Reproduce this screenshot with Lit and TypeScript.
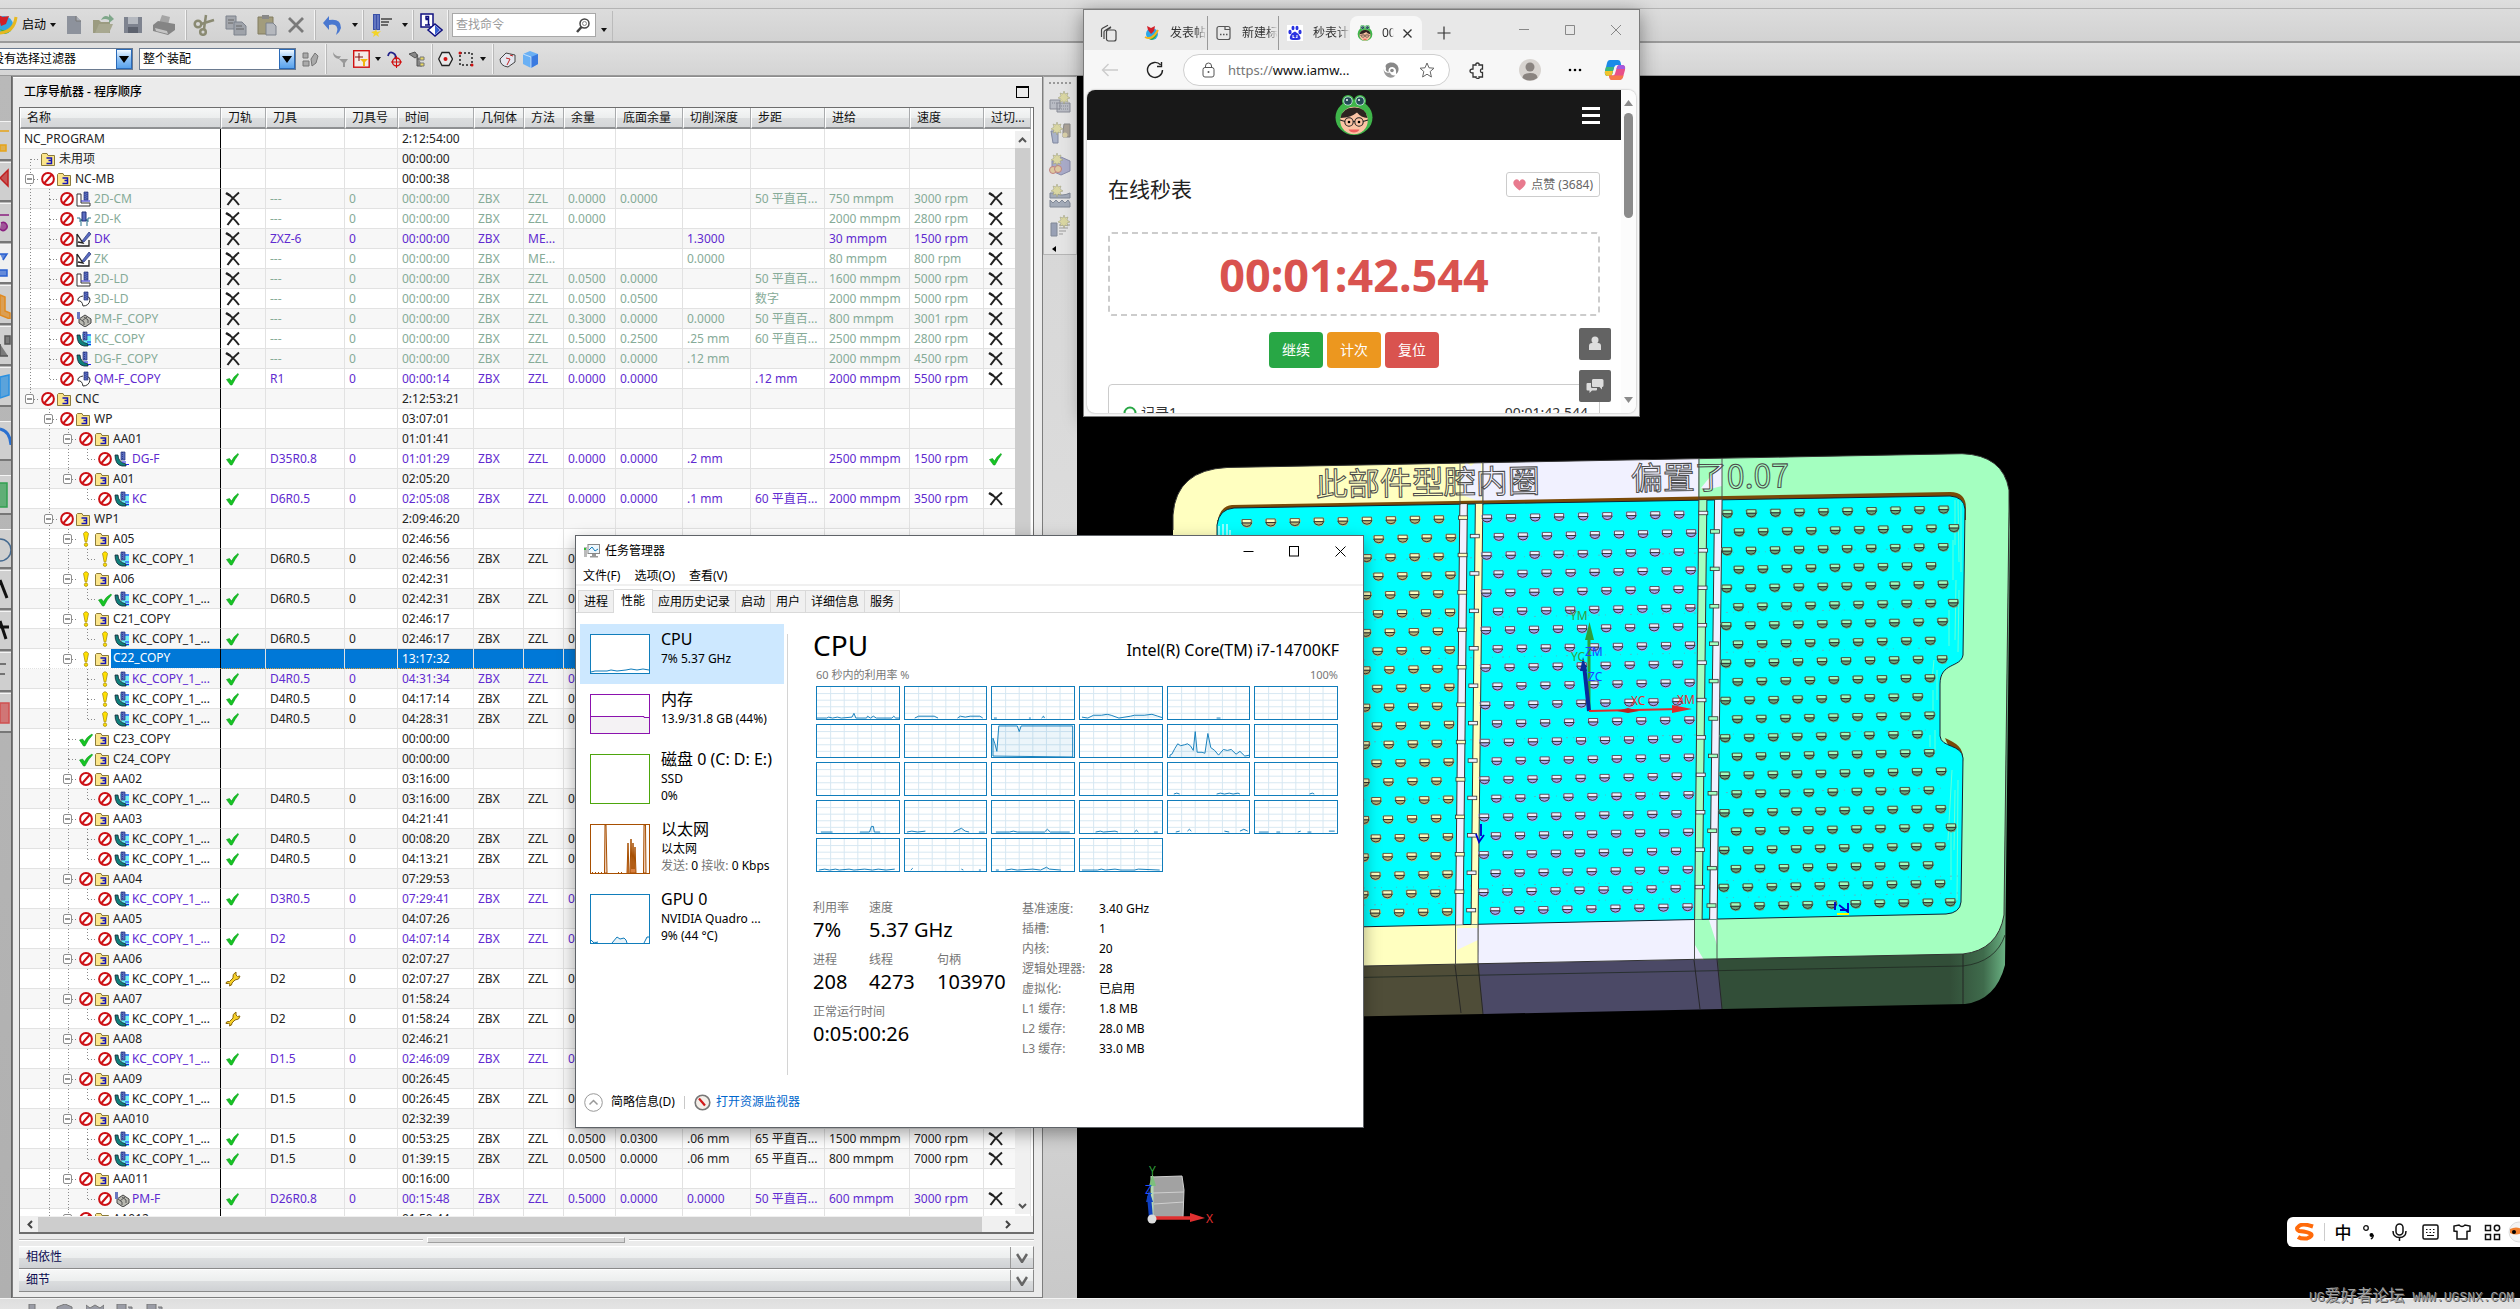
import { LitElement, html, svg, css, nothing } from "lit";
import { customElement } from "lit/decorators.js";
import { classMap } from "lit/directives/class-map.js";

const FONT = css`"Noto Sans", "Noto Sans CJK SC", sans-serif`;

/* ---------- shared icons ---------- */
const ic = (w: number, h: number, body: unknown, label = "") =>
  html`<svg class="ic" width=${w} height=${h} viewBox="0 0 ${w} ${h}" aria-label=${label || nothing} aria-hidden=${label ? nothing : "true"}>${body}</svg>`;

const cross = ic(16, 16, svg`<path d="M2 2.500Q8 6 14 14M14 1.500Q7 7 2.500 14" stroke="#222" stroke-width="2" fill="none"/><path d="M1 2l4 2.500" stroke="#222" stroke-width="2.500"/>`, "无");
const tick = ic(16, 16, svg`<path d="M1.500 8.500L4.500 7.500L6.500 10Q9 5 13 2.500L13.500 3.500Q10 8 7 14H5.500Z" fill="#16c424" stroke="#0c9a1c" stroke-width=".6"/>`, "完成");
const wrench = ic(16, 16, svg`<path d="M1 12.500Q1 10.500 3 10.500L4.500 10.500L8 7Q7 3 11 1L11 4L12.500 5.500L15 5Q14.500 9 10 9L7 12L6.500 14L4.500 15L5 13L3.500 12.500Z" fill="#f6cf28" stroke="#8a6a10"/>`, "修复");
const prohibited = ic(14, 16, svg`<circle cx="7" cy="8" r="5.900" fill="#fff" stroke="#cc0f14" stroke-width="2"/><path d="M3.500 12L10.500 4" stroke="#cc0f14" stroke-width="2"/>`, "禁止");
const bang = ic(14, 16, svg`<path d="M4.500 2.500Q7 -1 9.500 2.500L7.800 11H6.200Z" fill="#ffe100" stroke="#a98f10" stroke-width=".8"/><circle cx="7" cy="13.700" r="1.700" fill="#ffe100" stroke="#a98f10" stroke-width=".8"/>`, "注意");
const folder = ic(16, 16, svg`<path d="M.5 14.500V3.500L1.500 2.500H6L7 4.500H13.500V14.500Z" fill="#fbe58a" stroke="#8b7a3a"/><path d="M5.500 7h5v2.500h-3M10.500 9.500v3h-5" stroke="#1515b8" stroke-width="1.500" fill="none"/>`);
const tool = svg`<path d="M8 1h4v8H8z" fill="#5a6cc0" stroke="#23307a" stroke-width=".7"/><path d="M9 2v6M11 1v7" stroke="#23307a" stroke-width=".8" stroke-dasharray="1 1"/>`;
const holder = svg`<path d="M7 1h4v8H7z" fill="#5a6cc0" stroke="#23307a" stroke-width=".7"/><path d="M8.500 1v8" stroke="#23307a" stroke-width=".8" stroke-dasharray="1 1"/>`;
const ops: Record<string, unknown> = {
  cm: ic(16, 16, svg`<path d="M1 3v12h13v-3H5V3z" fill="#fff" stroke="#333"/>${tool}<path d="M5 10h9" stroke="#22c" />`),
  k: ic(16, 16, svg`<path d="M1 7h3v4M15 7h-3v4M5 15V9h6v6M4 9h8" stroke="#28708a" fill="none"/><path d="M6 1h4v9H6z" fill="#5a6cc0" stroke="#23307a"/>`),
  dk: ic(16, 16, svg`<path d="M1 3v12h12V9M1 3l6 9-5-1" stroke="#222" fill="none" stroke-width="1.300"/><path d="M6 10l7-9 2 2-7 8z" fill="#5a6cc0" stroke="#23307a" stroke-width=".7"/>`),
  ld: ic(16, 16, svg`<path d="M7 5Q1 6 2 10Q6 9 7 15Q13 15 14 9Q14 6 12 6" stroke="#333" fill="#fff"/>${tool}`),
  pm: ic(16, 16, svg`<path d="M3 8l6-4 6 4v4l-6 4-6-4z" fill="#b8b8b0" stroke="#444"/><path d="M4 8l4 3v3M8 6l4 3v3M6 10l5-4" stroke="#555" fill="none"/><path d="M1 1h3v7H1z" fill="#6a78c0"/>`),
  kc: ic(16, 16, svg`<path d="M6 3h9v12H8z" fill="#6ff0f4"/><path d="M1 4h3q0 7 8 9v2H8Q1 14 1 4z" fill="#0f7f7a" stroke="#123" stroke-width=".8"/>${holder}<path d="M11 11h4M12 13.500h3M11 4h4" stroke="#22e"/>`),
  dg: ic(16, 16, svg`<path d="M1 4h3q0 7 8 9v2H8Q1 14 1 4z" fill="#0f7f7a" stroke="#123" stroke-width=".8"/>${holder}<path d="M8 11h4M12 13.500h3" stroke="#22e"/>`),
};

/* ---------- program order data ---------- */
type Row = { l: number; n: string; s?: string; o?: string; c?: string; t?: string; v?: string[]; g?: string };
const G = (l: number, n: string, time: string, s = "no"): Row => ({ l, n, s, v: ["", "", time] });
const K = (n: string, s: string, t: string, c: string, vals: string, g = "x", o = "kc", l = 3): Row =>
  ({ l, n, s, o, c, t, g, v: vals.split("|") });
const LONG = "KC_COPY_1_...";
const D = "|0.0500";

const rows: Row[] = [
  { l: -1, n: "NC_PROGRAM", v: ["", "", "2:12:54:00"] },
  { l: 0, n: "未用项", v: ["", "", "00:00:00"] },
  G(0, "NC-MB", "00:00:38"),
  K("2D-CM", "no", "x", "pale", "---|0|00:00:00|ZBX|ZZL|0.0000|0.0000||50 平直百...|750 mmpm|3000 rpm", "x", "cm", 1),
  K("2D-K", "no", "x", "pale", "---|0|00:00:00|ZBX|ZZL|0.0000||||2000 mmpm|2800 rpm", "x", "k", 1),
  K("DK", "no", "x", "violet", "ZXZ-6|0|00:00:00|ZBX|ME...|||1.3000||30 mmpm|1500 rpm", "x", "dk", 1),
  K("ZK", "no", "x", "pale", "---|0|00:00:00|ZBX|ME...|||0.0000||80 mmpm|800 rpm", "x", "dk", 1),
  K("2D-LD", "no", "x", "pale", "---|0|00:00:00|ZBX|ZZL|0.0500|0.0000||50 平直百...|1600 mmpm|5000 rpm", "x", "cm", 1),
  K("3D-LD", "no", "x", "pale", "---|0|00:00:00|ZBX|ZZL|0.0500|0.0500||数字|2000 mmpm|5000 rpm", "x", "ld", 1),
  K("PM-F_COPY", "no", "x", "pale", "---|0|00:00:00|ZBX|ZZL|0.3000|0.0000|0.0000|50 平直百...|800 mmpm|3001 rpm", "x", "pm", 1),
  K("KC_COPY", "no", "x", "pale", "---|0|00:00:00|ZBX|ZZL|0.5000|0.2500|.25 mm|60 平直百...|2500 mmpm|2800 rpm", "x", "kc", 1),
  K("DG-F_COPY", "no", "x", "pale", "---|0|00:00:00|ZBX|ZZL|0.0000|0.0000|.12 mm||2000 mmpm|4500 rpm", "x", "dg", 1),
  K("QM-F_COPY", "no", "v", "violet", "R1|0|00:00:14|ZBX|ZZL|0.0000|0.0000||.12 mm|2000 mmpm|5500 rpm", "x", "ld", 1),
  G(0, "CNC", "2:12:53:21"),
  G(1, "WP", "03:07:01"),
  G(2, "AA01", "01:01:41"),
  K("DG-F", "no", "v", "violet", "D35R0.8|0|01:01:29|ZBX|ZZL|0.0000|0.0000|.2 mm||2500 mmpm|1500 rpm", "v", "dg"),
  G(2, "A01", "02:05:20"),
  K("KC", "no", "v", "violet", "D6R0.5|0|02:05:08|ZBX|ZZL|0.0000|0.0000|.1 mm|60 平直百...|2000 mmpm|3500 rpm"),
  G(1, "WP1", "2:09:46:20"),
  G(2, "A05", "02:46:56", "bang"),
  K("KC_COPY_1", "bang", "v", "", "D6R0.5|0|02:46:56|ZBX|ZZL" + D, ""),
  G(2, "A06", "02:42:31", "bang"),
  K(LONG, "ok", "v", "", "D6R0.5|0|02:42:31|ZBX|ZZL" + D, ""),
  G(2, "C21_COPY", "02:46:17", "bang"),
  K(LONG, "bang", "v", "", "D6R0.5|0|02:46:17|ZBX|ZZL" + D, ""),
  { ...G(2, "C22_COPY", "13:17:32", "bang"), c: "picked" },
  K(LONG, "bang", "v", "violet", "D4R0.5|0|04:31:34|ZBX|ZZL" + D, ""),
  K(LONG, "bang", "v", "", "D4R0.5|0|04:17:14|ZBX|ZZL" + D, ""),
  K(LONG, "bang", "v", "", "D4R0.5|0|04:28:31|ZBX|ZZL" + D, ""),
  G(2, "C23_COPY", "00:00:00", "ok"),
  G(2, "C24_COPY", "00:00:00", "ok"),
  G(2, "AA02", "03:16:00"),
  K(LONG, "no", "v", "", "D4R0.5|0|03:16:00|ZBX|ZZL" + D, ""),
  G(2, "AA03", "04:21:41"),
  K(LONG, "no", "v", "", "D4R0.5|0|00:08:20|ZBX|ZZL" + D, ""),
  K(LONG, "no", "v", "", "D4R0.5|0|04:13:21|ZBX|ZZL" + D, ""),
  G(2, "AA04", "07:29:53"),
  K(LONG, "no", "v", "violet", "D3R0.5|0|07:29:41|ZBX|ZZL" + D, ""),
  G(2, "AA05", "04:07:26"),
  K(LONG, "no", "v", "violet", "D2|0|04:07:14|ZBX|ZZL" + D, ""),
  G(2, "AA06", "02:07:27"),
  K(LONG, "no", "w", "", "D2|0|02:07:27|ZBX|ZZL" + D, ""),
  G(2, "AA07", "01:58:24"),
  K(LONG, "no", "w", "", "D2|0|01:58:24|ZBX|ZZL" + D, ""),
  G(2, "AA08", "02:46:21"),
  K(LONG, "no", "v", "violet", "D1.5|0|02:46:09|ZBX|ZZL" + D, ""),
  G(2, "AA09", "00:26:45"),
  K(LONG, "no", "v", "", "D1.5|0|00:26:45|ZBX|ZZL" + D, ""),
  G(2, "AA010", "02:32:39"),
  K(LONG, "no", "v", "", "D1.5|0|00:53:25|ZBX|ZZL|0.0500|0.0300|.06 mm|65 平直百...|1500 mmpm|7000 rpm"),
  K(LONG, "no", "v", "", "D1.5|0|01:39:15|ZBX|ZZL|0.0500|0.0000|.06 mm|65 平直百...|800 mmpm|7000 rpm"),
  G(2, "AA011", "00:16:00"),
  K("PM-F", "no", "v", "violet", "D26R0.8|0|00:15:48|ZBX|ZZL|0.5000|0.0000|0.0000|50 平直百...|600 mmpm|3000 rpm", "x", "pm"),
  G(2, "AA012", "01:50:44"),
];

const goesOn = (i: number, k: number) => {
  for (let j = i + 1; j < rows.length; j++) {
    if (rows[j].l < k) return false;
    if (rows[j].l === k) return true;
  }
  return k === 1 || k === 2;
};
const columns: [string, number][] = [
  ["名称", 201], ["刀轨", 45], ["刀具", 79], ["刀具号", 53], ["时间", 76], ["几何体", 50], ["方法", 40],
  ["余量", 52], ["底面余量", 67], ["切削深度", 68], ["步距", 74], ["进给", 85], ["速度", 74], ["过切...", 47],
];
const marks: Record<string, unknown> = { x: cross, v: tick, w: wrench };
const states: Record<string, unknown> = { no: prohibited, bang, ok: ic(14, 16, svg`<path d="M.5 9L3.500 8L5.500 10.500Q8 5.500 13 3L13.500 4Q9 8.500 6 15H4.500Z" fill="#16c424" stroke="#0c9a1c" stroke-width=".6"/>`, "完成") };

@customElement("program-navigator")
class ProgramNavigator extends LitElement {
  static styles = css`
    :host { display: flex; flex-direction: column; min-width: 0; min-height: 0; box-sizing: border-box;
      padding: 0 8px 5px 6px; background: #ebebeb; border: 1px solid #7d7d7d; border-top-color: #8c8c8c; box-shadow: inset 0 1px #fff;
      font: 12px/18px ${FONT}; color: #222; }
    .top { display: flex; align-items: center; justify-content: space-between; height: 30px; padding: 0 5px; }
    h2 { font: 500 12px/20px "Noto Sans", "Noto Sans CJK SC", sans-serif; margin: 0; color: #000; }
    .max { width: 13px; height: 12px; border: 1px solid #000; border-top-width: 2px; background: none; padding: 0; }
    .frame { flex: 1; min-height: 0; display: flex; flex-direction: column; border: 1px solid #6d6d6d; border-bottom-width: 2px; position: relative; background: #fff; }
    .clip { flex: 1; min-height: 0; overflow: hidden; padding-right: 2px; }
    table { width: 100%; table-layout: fixed; border-collapse: separate; border-spacing: 0; }
    th { height: 21px; padding: 1px 0 0 6px; text-align: left; font-weight: 400; color: #111; white-space: nowrap; box-sizing: border-box;
      background: linear-gradient(#f6f7f7, #eceeee 50%, #dcdedf 51%, #d4d6d8); border-left: 1px solid #fff; border-right: 1px solid #a9abad; border-bottom: 2px solid #8e9092; line-height: 18px; }
    td { height: 19px; padding: 0 0 0 4px; line-height: 18px; white-space: nowrap; overflow: hidden; border-bottom: 1px solid #e2e2e2; border-right: 1px solid #e2e2e2; }
    td.mark { padding-left: 4px; }
    td:first-child { padding: 0; border-right: 1px solid #000; }
    tr.odd td { background: #f7f7f7; }
    .pale { color: #86ab98; }
    .violet { color: #5f2bd0; }
    .node { display: flex; align-items: center; height: 19px; }
    .root { padding-left: 4px; }
    .ic { display: block; flex: none; }
    .status { width: 14px; margin-left: 2px; }
    .kind { margin-left: 2px; }
    .label { flex: 1; padding-left: 2px; }
    tr.picked td { background: #0078d7; color: #fff; border-bottom: 1px dotted #e8a33c; box-shadow: inset 0 1px #1c68a8; }
    tr.picked td:first-child { background: none; box-shadow: none; border-bottom-color: #e2e2e2; }
    .picked .label { background: #0078d7; align-self: stretch; }
    .vbar { position: absolute; right: 3px; top: 23px; bottom: 18px; width: 15px; background: #f0f0f0; display: flex; flex-direction: column; align-items: center; justify-content: space-between; }
    .vbar .thumb { flex: 1; width: 15px; background: #cdcdcd; margin-bottom: 150px; }
    .arrow { width: 15px; height: 17px; display: grid; place-items: center; border: 0; background: none; padding: 0; }
    .hbar { display: flex; align-items: center; height: 16px; background: #f0f0f0; padding: 0 17px 0 1px; }
    .hbar .arrow { width: 17px; }
    .hbar .thumb { flex: 1; height: 15px; background: #cdcdcd; margin-right: 17px; }
    .split { display: grid; grid-template-columns: 404px 198px 1fr; gap: 4px; align-items: center; height: 12px; }
    .split i { height: 1px; background: #b5b5b5; border-bottom: 1px solid #fff; }
    .split b { height: 4px; background: #d6d6d6; border: 1px solid #a0a0a0; border-top-color: #fff; border-left-color: #fff; }
    .fold { display: flex; align-items: stretch; justify-content: space-between; width: 100%; height: 23px; padding: 0 0 0 7px; border: 0; border-bottom: 1px solid #8a8a8a; border-top: 1px solid #fff; border-right: 1px solid #8a8a8a;
      background: linear-gradient(#f6f7f7, #eceeee 50%, #dcdedf 51%, #cfd1d4); font: 12px/20px ${FONT}; color: #0b0b50; }
    .fold span { width: 22px; display: grid; place-items: center; border-left: 1px solid #9a9a9a; }
  `;
  name(r: Row, i: number) {
    if (r.l < 0) return html`<div class="node root"><span>${r.n}</span></div>`;
    const kids = (!!rows[i + 1] && rows[i + 1].l > r.l) || i === rows.length - 1;
    const guides = [];
    for (let k = 0; k <= r.l; k++) {
      const on = goesOn(i, k);
      const own = k === r.l;
      guides.push(ic(19, 20, svg`<g stroke="#8a8a8a" stroke-dasharray="1 2">
        ${own && i > 1 ? svg`<path d="M10.500 0v10"/>` : nothing}
        ${on && !own ? svg`<path d="M10.500 0v20"/>` : nothing}
        ${own && on ? svg`<path d="M10.500 10v10"/>` : nothing}
        ${own ? svg`<path d="M11 10.500h8"/>` : nothing}</g>
        ${own && kids && !r.o ? svg`<rect x="5.500" y="5.500" width="8" height="9" rx="1.500" fill="#fff" stroke="#8e8e8e"/><path d="M7 10h5" stroke="#333"/>` : nothing}`));
    }
    return html`<div class="node">${guides}${r.s ? html`<span class="status">${states[r.s]}</span>` : nothing}
      <span class="kind">${r.o ? ops[r.o] : folder}</span><span class="label">${r.n}</span></div>`;
  }
  render() {
    return html`
      <div class="top"><h2>工序导航器 - 程序顺序</h2><button class="max" aria-label="最大化"></button></div>
      <div class="frame">
        <div class="clip"><table>
          <colgroup>${columns.map(([, w]) => html`<col width=${w}>`)}</colgroup>
          <thead><tr>${columns.map(([n]) => html`<th scope="col">${n}</th>`)}</tr></thead>
          <tbody>${rows.map((r, i) => {
            const v = r.v ?? [];
            return html`<tr class=${classMap({ odd: i % 2 === 1, [r.c || "plain"]: true })}>
              <td>${this.name(r, i)}</td><td class="mark">${r.t ? marks[r.t] : nothing}</td>
              ${Array.from({ length: 11 }, (_, k) => html`<td>${v[k] ?? ""}</td>`)}
              <td class="mark">${r.g ? marks[r.g] : nothing}</td></tr>`;
          })}</tbody></table></div>
        <div class="vbar"><button class="arrow" aria-label="向上">${ic(9, 6, svg`<path d="M1 5l3.500-3.500L8 5" stroke="#555" stroke-width="2" fill="none"/>`)}</button><div class="thumb"></div>
          <button class="arrow" aria-label="向下">${ic(9, 6, svg`<path d="M1 1l3.500 3.500L8 1" stroke="#555" stroke-width="2" fill="none"/>`)}</button></div>
        <div class="hbar"><button class="arrow" aria-label="向左">${ic(6, 9, svg`<path d="M5 1L1.500 4.500L5 8" stroke="#444" stroke-width="2" fill="none"/>`)}</button><div class="thumb"></div>
          <button class="arrow" aria-label="向右">${ic(6, 9, svg`<path d="M1 1l3.500 3.500L1 8" stroke="#444" stroke-width="2" fill="none"/>`)}</button></div>
      </div>
      <div class="split"><i></i><b></b><i></i></div>
      ${["相依性", "细节"].map(t => html`<button class="fold">${t}<span>${ic(12, 10, svg`<path d="M1 1l5 8 5-8" stroke="#666" stroke-width="2.500" fill="none"/>`)}</span></button>`)}
    `;
  }
}

/* ---------- part view ---------- */
const CREAM = ["#ffffc0", "#b7b478"], LAV = ["#f1f1ff", "#a5a5ee"], GREEN = ["#a4ffc0", "#66a47a"];
const holes: unknown[] = [];
const bosses: unknown[] = [];
for (let r = 0; r < 22; r++) {
  const odd = r % 2 === 1;
  for (let c = 0; c < 30; c++) {
    let x = 1246.7 + 24.03 * c + (odd ? 12 : 0) - 0.18 * r;
    if (odd && c === 29) { if (![1, 5, 17, 21].includes(r)) continue; x -= 1.5; }
    if ((r === 10 || r === 12) && c === 29) continue;
    const y = 523 + 18.7 * r - 0.0192 * (x - 1246.7);
    if (x < 1350 && r > 0) continue;
    if (c === 9 || c === 19) {
      const fill = c === 19 ? (odd ? GREEN[0] : LAV[0]) : odd ? LAV[0] : CREAM[0];
      bosses.push(svg`<rect x=${x - 4.5} y=${y - 3} width="9" height="3.500" fill=${fill} stroke="#333" stroke-width=".8"/>`);
      continue;
    }
    const [a, b] = c < 9 ? CREAM : c < 19 ? LAV : GREEN;
    holes.push(svg`<g transform="translate(${x.toFixed(1)} ${y.toFixed(1)})"><path d="M-6 -3L-4 -4H5L6 -1L4 4L0 5L-4 3Z" fill=${b}/><path d="M-4.500 -3.500H4.500V0H-4.500Z" fill=${a} stroke="#2b2b2b" stroke-width=".7"/><path d="M-5 0Q-4 3.500 0 3.500T5 0Z" fill=${b} stroke="#2b2b2b" stroke-width=".9"/></g>`);
  }
}
const pocket = "M1217 930V525Q1219 509 1234 508L1950 496Q1964 497 1965 509L1963 630C1963 641 1940 632 1940 650V696C1941 712 1962 700 1963 718L1961 902Q1960 913 1946 914L1217 930Z"
  .replace("630C1963 641 1940 632 1940 650V696C1941 712 1962 700 1963 718", "655C1961 668 1940 662 1940 684V736C1941 748 1962 744 1963 758");

@customElement("part-view")
class PartView extends LitElement {
  static styles = css`
    :host { display: block; min-width: 0; min-height: 0; background: #000; overflow: hidden; }
    svg { display: block; width: 100%; height: 100%; }
    .engraved { font: 32px "Noto Sans CJK SC", sans-serif; fill: none; stroke: #4a4a4a; stroke-width: 1; }
    .axis { font: 12px "Noto Sans", sans-serif; }
  `;
  render() {
    return html`<svg viewBox="1077 76 1443 1222" preserveAspectRatio="xMinYMin slice" role="img" aria-label="零件模型">
      <defs>
        <linearGradient id="edge" x1="1950" x2="2006" gradientUnits="userSpaceOnUse"><stop offset="0" stop-color="#324e38"/><stop offset=".6" stop-color="#3f6b4c"/><stop offset="1" stop-color="#6bb384"/></linearGradient>
        <clipPath id="face"><path d="M1173 970V515Q1176 470 1227 467.500L1962 453.700Q2003 455 2009 490V510L2004 915Q1998 950 1963 954L1173 970Z"/></clipPath>
        <clipPath id="pk"><path d=${pocket}/></clipPath>
      </defs>
      <path d="M1173 960H1483V1014L1173 1020Z" fill="#4f4d38"/>
      <path d="M1478 955H1722V1009L1483 1014Z" fill="#4b4966"/>
      <path d="M1717 950L2004 890L2009 500L2010 530L2005 965Q1996 1000 1965 1004L1722 1009Z" fill="url(#edge)"/>
      <path d="M1173 981L1963 966Q1996 962 2005 935" stroke="#1f2a22" fill="none" stroke-width=".8"/>
      <path d="M1455 965l6 48M1478 964l5 50M1694 960l6 49M1717 959l5 50M1963 954v50" stroke="#222" stroke-width=".9"/>
      <g clip-path="url(#face)">
        <path d="M1173 440H1483L1478 970H1173Z" fill="#ffffc0"/>
        <path d="M1483 440H1699L1694 970H1478Z" fill="#f1f1ff"/>
        <path d="M1699 440H2020V970H1694Z" fill="#a4ffc0"/>
        <path d="M1461 470L1466 462L1471 466L1481 458V502L1462 495Z M1457 928H1478V940L1457 950Z" fill="#f1f1ff"/>
        <path d="M1701 488L1722 462V486L1706 490Z M1709 920H1717V945Z M1695 945L1704 960H1695Z" fill="#f1f1ff"/>
      </g>
      <path d="M1173 530V515Q1176 470 1227 467.500L1962 453.700Q2003 455 2009 490V510L2004 915Q1998 950 1963 954L1363 966" fill="none" stroke="#333"/>
      <path d="M1217 525Q1219 506 1232 505L1950 492Q1966 492 1966 508V520H1217ZM1945 738C1958 744 1964 748 1963 762L1950 750Z" fill="#7a4a08"/>
      <path d=${pocket} fill="#00ffff" stroke="#123" stroke-width="1"/>
      <g stroke="#a4ffc0" stroke-width=".9" opacity=".7" fill="none">
        <path d="M1955 500v45M1958 500l1 62M1961 502v70M1953 540v40M1956 580l-1 60M1959 590l-1 62M1949 610v36M1934 660l-2 20M1937 670v30M1933 690v20M1930 735v12M1935 730v20M1952 770l-4 70M1955 790l-1 60M1958 780l-1 120M1951 830v50"/></g>
      <g stroke="#e8ffff" stroke-width="1.200"><path d="M1219 526v10M1223 524v12M1227 524v12M1230 530v6"/></g>
      <g stroke="#6ab" stroke-width=".8" stroke-dasharray="1 9 2 5 1 14"><path d="M1364 888L1960 876M1364 905L1960 893M1364 560L1950 548M1364 660L1930 648M1364 742L1930 730M1364 800L1950 788M1364 620L1940 608"/></g>
      <g stroke="#333" stroke-width="1" clip-path="url(#pk)">
        <path d="M1460 490h7.500L1463 930h-7.500Z" fill="#f1f1ff"/><path d="M1475.500 490H1483L1478 930h-7Z" fill="#ffffc0"/>
        <path d="M1699 490h8L1702 930h-7.500Z" fill="#a4ffc0"/><path d="M1714.700 490h7.500L1717 930h-7.500Z" fill="#f1f1ff"/>
      </g>
      <g fill="none" stroke="#444" stroke-width=".9"><path d="M1460 463V505M1483 462V505M1699 459V500M1722 458V500M1455.500 925V965M1478 925V964M1694.500 920V960M1717 920V959"/></g>
      ${holes}${bosses}
      <text class="engraved" x="1316" y="496" transform="rotate(-1 1316 496)">此部件型腔内圈</text>
      <text class="engraved" x="1631" y="490" transform="rotate(-1 1631 490)">偏置了0.07</text>
      <g fill="none" stroke-width="2"><path d="M1589 711V640" stroke="#2f9e3a" stroke-width="3"/><path d="M1589 711L1584 665" stroke="#0a2a9a" stroke-width="4"/><path d="M1589 711L1680 709" stroke="#e02b2b"/></g>
      <path d="M1585 640L1589.500 622L1594 640Z" fill="#2f9e3a"/><path d="M1580 671L1583 657L1587 671Z" fill="#0a2a9a"/>
      <path d="M1617 711L1628 708L1639 711L1628 713Z" fill="#c02020"/><path d="M1672 705L1692 709L1672 713Z" fill="#e02b2b"/>
      <g class="axis"><text x="1570" y="620" fill="#3a9a40">YM</text><text x="1571" y="661" fill="#3a9a40">YC</text><text x="1585" y="656" fill="#2040ff">ZM</text><text x="1588" y="681" fill="#2040ff">ZC</text><text x="1631" y="705" fill="#e03030">XC</text><text x="1677" y="704" fill="#e03030">XM</text></g>
      <path d="M1476 834l3 8 5-7M1481 824v12" stroke="#00c" stroke-width="1.800" fill="none"/><path d="M1835 902v8M1839 905l9 7v-9M1840 910h8" stroke="#00c" stroke-width="1.800" fill="none"/><path d="M1837 914h12" stroke="#ff0" stroke-width="2"/>
      <path d="M1151 1177L1182 1176L1184 1190L1183 1217L1153 1218Z" fill="#a2a2a2"/><path d="M1151 1177L1182 1176L1184 1190L1183 1217M1153 1193L1184 1192M1154 1204L1184 1202" stroke="#cfcfcf" fill="none"/>
      <path d="M1152 1218V1176" stroke="#b6d8b6" stroke-width="3"/><path d="M1149 1186L1152.500 1174L1156 1186Z" fill="#7cc07c"/><path d="M1151 1218L1149 1196" stroke="#1040c0" stroke-width="4"/><path d="M1146 1202L1149 1190L1153 1202Z" fill="#1040c0"/>
      <path d="M1153 1218H1195" stroke="#e03030" stroke-width="3.500"/><path d="M1190 1213L1205 1218L1190 1222Z" fill="#e03030"/><circle cx="1152" cy="1219" r="4.500" fill="#ddd"/>
      <g class="axis"><text x="1149" y="1175" fill="#2f9e3a">Y</text><text x="1145" y="1194" fill="#2050ff">Z</text><text x="1206" y="1223" fill="#e03030">X</text></g>
    </svg>`;
  }
}

/* ---------- task manager ---------- */
const cores: (string | null)[] = [
  "M0 33h10l2-1 4 1 5-1 4 1 11-1 2-4 2 5h11l1-2 3 2 3-2 3 2h16l2-2 2 2h5", "M10 33l4-2h16l4 2M54 33l3-2 5 1 5-1 10 0 3 2", "M2 33h3M38 33h2M51 33l2-2 1 2", "M2 32l6 1 6-3h8l6-1 4 1 8 3 12-2 4-1h10l8-1 6 2 6 2", "M50 33h4", null,
  null, null, "M1 33V14l2 6 2 8 2-27h19l2 6 2-6h53v33z", null, "M2 32l2-1 3-6 3-5 3 2 4-1 3-1 3 2 3 5 2-20 2 22 5 0 3 1 3-21 3 15 4 3 4 5 5-6 4 1 4-1 5 5 4-3 5 5 5-1 3-10 3 7 4 4v2H2z", null,
  null, null, null, null, "M6 33l3-1 3 1M50 33l4-1 4 1 5-1 4 1 5-1 2 1", "M56 33l3-1 2 1",
  "M4 33h12M44 33h10l2-6 2 0 1 6h6", "M2 33l5-1 6 1 8-1M50 33l4-2 4-2 4 3 4 1M76 33h6", "M4 33h14l4-1 4 1h28l3-3 3 3h20", "M16 33l5-1 3 1 12-1 3 1M56 33l2-2 2 2M76 33h4", "M8 33l4-1M20 32l2-2 2 2M58 32l5 1M74 32l4-2 4 2", "M4 33h10M22 33h4M44 33l3-1M54 33h4M76 32h6",
  "M2 33l6-1 5 1 6-1 4 1 10-1 5 1 11-1 8 1 6-1 8 1 9-1", "M6 33l2-2M58 32l2 1M76 33h2", "M4 33h3M14 33l6-1 6 1 16-1 8 1 6-3 3 2 12 1", "M2 33h16l4-1 4 1 10-1 6 1h14l4-1 22 1",
];

@customElement("task-manager")
class TaskManager extends LitElement {
  static styles = css`
    :host { display: flex; flex-direction: column; box-sizing: border-box; background: #fff; border: 1px solid #5f6368; box-shadow: 0 6px 16px rgba(0,0,0,.35); font: 12px/16px ${FONT}; color: #000; }
    button { font: inherit; color: inherit; border: 0; background: none; padding: 0; }
    .ic { display: block; flex: none; }
    .bar { display: flex; align-items: center; height: 30px; padding-left: 8px; }
    .bar h1 { flex: 1; font: 12px/16px ${FONT}; margin: 0 0 0 5px; }
    .bar button { width: 46px; height: 30px; display: grid; place-items: center; }
    .menu { display: flex; gap: 14px; height: 20px; padding: 2px 7px 0; border-bottom: 2px solid #f0f0f0; box-sizing: border-box; }
    .tabs { display: flex; align-items: flex-end; height: 26px; padding-left: 2px; border-bottom: 1px solid #d9d9d9; }
    .tab { height: 22px; padding: 0 5px; border: 1px solid #d9d9d9; border-left-width: 0; border-bottom: 0; background: #f0f0f0; white-space: nowrap; }
    .tab:first-child { border-left-width: 1px; }
    .tab.on { background: #fff; height: 24px; margin-bottom: -1px; padding: 0 7px 2px; }
    .body { flex: 1; display: flex; padding: 11px 24px 0 4px; }
    .list { width: 204px; margin: 0; padding: 0; flex: none; }
    .item { display: flex; gap: 11px; width: 204px; height: 60px; padding: 10px 0 0 10px; box-sizing: border-box; text-align: left; align-items: flex-start; }
    .item.tall { height: 70px; }
    .item.on { background: #cde8ff; }
    .item .txt { display: flex; flex-direction: column; margin-top: -5px; white-space: nowrap; }
    .item strong { font: 16px/21px ${FONT}; }
    .item em { color: #777; font-style: normal; }
    .item .txt span { line-height: 17px; }
    .rule { width: 1px; background: #d4d4d4; margin: 10px 25px 2px 3px; }
    .main { flex: 1; min-width: 0; }
    .head { display: flex; justify-content: space-between; align-items: flex-end; height: 43px; }
    .head h2 { font: 28px/43px ${FONT}; margin: 0; }
    .head span { font-size: 16px; line-height: 34px; }
    .cap { display: flex; justify-content: space-between; font-size: 11px; line-height: 16px; color: #777; padding: 0 1px 3px 3px; }
    .grid { display: grid; grid-template-columns: repeat(6, 1fr); gap: 4px; margin: 0 1px 0 3px; }
    .grid svg { width: 100%; height: 34px; display: block; box-sizing: border-box; border: 1px solid #117dbb; }
    .facts { display: flex; margin-top: 27px; gap: 11px; }
    .big { display: grid; grid-template-columns: 56px 68px 74px; grid-auto-rows: 52px; margin: 0; align-content: start; }
    dt { color: #777; line-height: 18px; }
    dd { margin: 0; }
    .big dd { font-size: 20px; line-height: 26px; white-space: nowrap; }
    .big .wide { grid-column: 1 / -1; }
    .small { margin: 0; }
    .small div { display: grid; grid-template-columns: 77px auto; height: 20px; }
    .small dt, .small dd { line-height: 20px; }
    .foot { display: flex; align-items: center; gap: 9px; height: 50px; padding-left: 8px; }
    .foot a { color: #0066cc; text-decoration: none; margin-left: -4px; }
    .foot button { margin-left: -1px; }
    .foot i { width: 1px; height: 13px; background: #c8c8c8; }
  `;
  render() {
    const it = (on: boolean, tall: boolean, col: string, g: unknown, title: string, ...sub: unknown[]) => html`
      <button class=${classMap({ item: true, on, tall })}>
        ${ic(60, tall ? 50 : 40, svg`<rect x=".5" y=".5" width="59" height=${tall ? 49 : 39} fill="#fff" stroke=${col}/>${g}`)}
        <span class="txt"><strong>${title}</strong>${sub.map(s => html`<span>${s}</span>`)}</span></button>`;
    const spikes = svg`<path d="M14.500 49L15 1h1l1 48zM53.500 49L54 1h1.500l.5 48z" fill="#f5d9c8" stroke="#a74f01"/><path d="M37 49l1-30 1 30M40 49l1-34 1 30 1-26 1 26 1-22 1 26z" fill="#d98040" stroke="#a74f01"/><path d="M2 48.500h10M28 48.500h6" stroke="#a74f01" stroke-dasharray="1 2"/>`;
    const big = [["利用率", "7%"], ["速度", "5.37 GHz"], null, ["进程", "208"], ["线程", "4273"], ["句柄", "103970"]];
    const small = [["基准速度:", "3.40 GHz"], ["插槽:", "1"], ["内核:", "20"], ["逻辑处理器:", "28"], ["虚拟化:", "已启用"], ["L1 缓存:", "1.8 MB"], ["L2 缓存:", "28.0 MB"], ["L3 缓存:", "33.0 MB"]];
    return html`
      <header class="bar">${ic(16, 14, svg`<path d="M0 3h3v10H0z" fill="#bbb"/><rect x="4" y=".5" width="11.500" height="9" fill="#eef7fd" stroke="#888"/><path d="M5 6l3-3 3 4 3-2" stroke="#117dbb" fill="none"/><path d="M8 10h4v2h2v1.500H6V12h2z" fill="#999"/><path d="M0 4h2v2H0z" fill="#3b3"/>`)}
        <h1>任务管理器</h1>
        <button aria-label="最小化">${ic(11, 11, svg`<path d="M.5 5.500h10" stroke="#000"/>`)}</button><button aria-label="最大化">${ic(11, 11, svg`<rect x=".5" y=".5" width="9" height="9.500" fill="none" stroke="#000"/>`)}</button><button aria-label="关闭">${ic(11, 11, svg`<path d="M.5.5l10 10M10.500.5l-10 10" stroke="#000"/>`)}</button></header>
      <nav class="menu">${["文件(F)", "选项(O)", "查看(V)"].map(t => html`<button>${t}</button>`)}</nav>
      <div class="tabs" role="tablist">${["进程", "性能", "应用历史记录", "启动", "用户", "详细信息", "服务"].map((t, i) => html`<button role="tab" class=${classMap({ tab: true, on: i === 1 })}>${t}</button>`)}</div>
      <div class="body">
        <div class="list">
          ${it(true, false, "#117dbb", svg`<path d="M1 38l4-1h12l4-1 6 1 9-1 5-1 6 1 6-1 6 1" stroke="#117dbb" fill="none"/>`, "CPU", "7%  5.37 GHz")}
          ${it(false, false, "#8b12ae", svg`<path d="M1 22.500h53v1h5V39H1z" fill="#f4f2f4"/><path d="M1 22.500h53v1h5" stroke="#8b12ae" fill="none"/>`, "内存", "13.9/31.8 GB (44%)")}
          ${it(false, true, "#4da60c", nothing, "磁盘 0 (C: D: E:)", "SSD", "0%")}
          ${it(false, true, "#a74f01", spikes, "以太网", "以太网", html`<em>发送:</em> 0 <em>接收:</em> 0 Kbps`)}
          ${it(false, true, "#117dbb", svg`<path d="M1 46l3 3 4-1M22 49l5-6 3 2 4-1 2 2 1 3M54 49l3-6h2" stroke="#117dbb" fill="#e8f2f8"/>`, "GPU 0", "NVIDIA Quadro ...", "9%  (44 °C)")}
        </div>
        <div class="rule"></div>
        <section class="main">
          <div class="head"><h2>CPU</h2><span>Intel(R) Core(TM) i7-14700KF</span></div>
          <div class="cap"><span>60 秒内的利用率 %</span><span>100%</span></div>
          <div class="grid">${cores.map(p => html`<svg viewBox="0 0 84 34" preserveAspectRatio="none" aria-hidden="true"><path d="M14 0v34M28 0v34M42 0v34M56 0v34M70 0v34M0 7h84M0 14h84M0 21h84M0 28h84" stroke="#d5e7f1" fill="none"/>${p ? svg`<path d=${p} fill="#117dbb" fill-opacity=".08" stroke="#117dbb"/>` : nothing}</svg>`)}</div>
          <div class="facts">
            <dl class="big">${big.map(f => html`<div>${f ? html`<dt>${f[0]}</dt><dd>${f[1]}</dd>` : nothing}</div>`)}
              <div class="wide"><dt>正常运行时间</dt><dd>0:05:00:26</dd></div></dl>
            <dl class="small">${small.map(([a, b]) => html`<div><dt>${a}</dt><dd>${b}</dd></div>`)}</dl>
          </div>
        </section>
      </div>
      <footer class="foot">${ic(19, 19, svg`<circle cx="9.500" cy="9.500" r="8.800" fill="#fff" stroke="#999"/><path d="M5.500 11.500l4-4 4 4" stroke="#999" stroke-width="1.500" fill="none"/>`)}<button>简略信息(D)</button><i></i>
        ${ic(17, 17, svg`<circle cx="8.500" cy="8.500" r="7.300" fill="#f3eee8" stroke="#777" stroke-width="1.600"/><path d="M5 4.500l6 7" stroke="#d01818" stroke-width="2.200"/>`)}<a href="#monitor">打开资源监视器</a></footer>`;
  }
}

/* ---------- browser window ---------- */
const frog = (s: number) => html`<svg class="ic" width=${s} height=${s} viewBox="0 0 40 40" aria-hidden="true"><ellipse cx="20" cy="22.500" rx="18.500" ry="17.500" fill="#3fb54a"/><circle cx="14" cy="6" r="6" fill="#3fb54a"/><circle cx="26" cy="6" r="6" fill="#3fb54a"/><circle cx="14" cy="6" r="4.600" fill="#cfeaea"/><circle cx="26" cy="6" r="4.600" fill="#cfeaea"/><circle cx="14" cy="6" r="3.800" fill="#234a55"/><circle cx="26" cy="6" r="3.800" fill="#234a55"/><circle cx="13" cy="5" r="1" fill="#fff"/><circle cx="25" cy="5" r="1" fill="#fff"/><circle cx="20" cy="25.500" r="13.800" fill="#fbc3a4"/><path d="M6.500 23Q8 13 20 12.500T33.500 23Q27 22.500 23 17.500Q17 22.500 6.500 23Z" fill="#2c2420"/><g fill="none" stroke="#222" stroke-width="1.100"><circle cx="15" cy="27" r="4.200"/><circle cx="25" cy="27" r="4.200"/><path d="M6 25l5 1.500M34 25l-5 1.500M19 26.500h2"/></g><circle cx="15" cy="27" r="1.300"/><circle cx="25" cy="27" r="1.300"/><path d="M14.500 34.500h11Q24 37.500 20 37.500T14.500 34.500Z" fill="#f0605f"/></svg>`;
const planet = html`<svg class="ic" width="16" height="16" viewBox="0 0 16 16" aria-hidden="true"><circle cx="8" cy="9" r="6" fill="#2aa7e8"/><path d="M4 12q5 2 9-4-1 6-6 7z" fill="#35b03c"/><path d="M1 12Q8 16 14 5" stroke="#f2b51e" stroke-width="2" fill="none"/><path d="M3 1l4 2 4-2-1 5-3 3-3-4z" fill="#d3202a"/></svg>`;

@customElement("web-browser")
class WebBrowser extends LitElement {
  static styles = css`
    :host { display: flex; flex-direction: column; box-sizing: border-box; background: #f7f7f7; border: 1px solid #7c7c7c; box-shadow: 0 4px 18px rgba(0,0,0,.4); font: 12px/16px ${FONT}; color: #333; padding: 0 3px 3px; }
    button { font: inherit; color: inherit; border: 0; background: none; padding: 0; display: grid; place-items: center; }
    .ic { display: block; flex: none; }
    .strip { display: flex; align-items: flex-end; height: 40px; background: #e8e8e8; margin: 0 -3px; }
    .strip .all { width: 49px; height: 34px; }
    .tab { display: flex; align-items: center; gap: 10px; width: 71px; height: 34px; padding-left: 8px; box-sizing: border-box; overflow: hidden; }
    .tab span { overflow: hidden; white-space: nowrap; font-size: 12px; flex: 1; mask-image: linear-gradient(90deg, #000 70%, transparent); }
    .tab:nth-child(2) { padding-left: 11px; width: 75px; border-right: 1px solid #999; }
    .tab:nth-child(3) { border-right: 1px solid #999; }
    .tab.on { background: #f7f7f7; border-radius: 8px 8px 0 0; width: 72px; gap: 9px; padding: 0 10px 0 7px; }
    .new { width: 43px; height: 34px; }
    .wins { display: flex; margin-left: auto; align-self: flex-start; color: #777; }
    .wins button { width: 46px; height: 40px; }
    .tools { display: flex; align-items: center; height: 40px; }
    .tools > button { height: 32px; flex: none; }
    .back { width: 46px; } .again { width: 44px; }
    .url { display: flex; flex: none; align-items: center; width: 267px; height: 32px; box-sizing: border-box; margin-left: 6px; padding: 0 14px 0 18px; border: 1px solid #cfcfcf; border-radius: 16px; background: #fff; }
    .addr { flex: 1; margin-left: 13px; font: 13px/18px ${FONT}; color: #767676; white-space: nowrap; }
    .addr b { font-weight: 400; color: #111; }
    .url .gap { margin-left: 20px; }
    .ext { width: 54px; } .bar { width: 1px; height: 16px; background: #ccc; } .me { width: 52px; } .more { width: 38px; } .pilot { width: 42px; }
    .page { flex: 1; min-height: 0; display: flex; background: #fff; border-radius: 8px; overflow: hidden; box-shadow: 0 0 2px #999; }
    .site { flex: 1; min-width: 0; display: flex; flex-direction: column; position: relative; }
    .nav { flex: none; display: grid; grid-template-columns: 1fr auto 1fr; align-items: center; height: 50px; background: #181818; }
    .nav .ham { justify-self: end; margin-right: 20px; grid-column: 3; }
    .nav .logo { grid-column: 2; }
    .title { display: flex; justify-content: space-between; align-items: flex-start; padding: 32px 21px 0; height: 60px; flex: none; }
    h1 { font: 21px/34px ${FONT}; margin: 0; color: #222; }
    .like { display: flex; align-items: center; gap: 5px; height: 25px; padding: 0 6px; border: 1px solid #ccc; border-radius: 3px; color: #666; background: #fff; white-space: nowrap; }
    .clock { flex: none; box-sizing: border-box; margin: 0 21px; height: 84px; border: 2px dashed #ccc; border-radius: 4px; color: #d9534f; font: 700 45px/82px ${FONT}; text-align: center; }
    .acts { display: flex; justify-content: center; gap: 4px; margin: 16px 0; flex: none; }
    .acts button { width: 54px; height: 36px; border-radius: 4px; color: #fff; font-size: 14px; }
    .go { background: #28a745; } .lap { background: #ec971f; } .reset { background: #d9534f; }
    .log { margin: 0 21px; padding: 16px 11px 0 14px; flex: none; border: 1px solid #ccc; border-radius: 4px; height: 60px; display: flex; justify-content: space-between; font-size: 14px; line-height: 20px; color: #333; }
    .log span { display: flex; align-items: center; gap: 4px; height: 24px; }
    .float { position: absolute; right: 10px; top: 238px; display: grid; gap: 10px; }
    .float button { width: 32px; height: 32px; background: #636363; border-radius: 2px; }
    .scroll { width: 15px; display: flex; flex-direction: column; align-items: center; background: #fcfcfc; padding: 10px 0; justify-content: space-between; }
    .scroll .thumb { width: 9px; height: 105px; border-radius: 5px; background: #8b8b8b; margin: 7px 0 auto; }
  `;
  render() {
    const w = (d: string, l: string) => html`<button aria-label=${l}>${ic(12, 12, svg`<path d=${d} stroke="#888" fill="none"/>`)}</button>`;
    return html`
      <div class="strip">
        <button class="all" aria-label="标签页操作">${ic(18, 18, svg`<path d="M6 6.500l5-3M1.500 13V6Q1.500 5 2.500 4.300L8 1.200M4 15V8q0-1 1-1.600l6-3.700" stroke="#444" fill="none" stroke-width="1.200"/><rect x="6.500" y="6" width="9.500" height="11" rx="2" fill="none" stroke="#444" stroke-width="1.200"/>`)}</button>
        <div class="tab">${planet}<span>发表帖子</span></div>
        <div class="tab">${ic(16, 16, svg`<rect x="1" y="1.500" width="13" height="13" rx="2" fill="none" stroke="#555" stroke-width="1.200"/><path d="M9 1.500v3h5" fill="none" stroke="#555" stroke-width="1.200"/><path d="M4 9.500h1.500M7 9.500h1.500M10 9.500h1.500" stroke="#555" stroke-width="1.500"/>`)}<span>新建标签</span></div>
        <div class="tab">${ic(16, 16, svg`<rect width="16" height="16" fill="#fff"/><g fill="#2932e1"><ellipse cx="3" cy="7" rx="1.600" ry="2.200"/><ellipse cx="6" cy="3" rx="1.500" ry="2.200"/><ellipse cx="10" cy="3" rx="1.500" ry="2.200"/><ellipse cx="13" cy="7" rx="1.600" ry="2.200"/><path d="M8 6.500Q11 8 13 11.500T10 15H6Q2 15 3 11.500T8 6.500Z"/></g><path d="M6 10v3M10 10v3M6 12.500h1.500M8.800 12.500h1" stroke="#fff" fill="none"/>`)}<span>秒表计时</span></div>
        <div class="tab on">${frog(16)}<span>00:01</span><button aria-label="关闭标签">${ic(9, 9, svg`<path d="M.5.5l8 8M8.500.5l-8 8" stroke="#333" stroke-width="1.300"/>`)}</button></div>
        <button class="new" aria-label="新标签">${ic(14, 14, svg`<path d="M7 .5v13M.5 7h13" stroke="#333" stroke-width="1.200"/>`)}</button>
        <div class="wins">${w("M1 5.500h10", "最小化")}${w("M1.500 1.500h9v9h-9z", "最大化")}${w("M1 1l10 10M11 1L1 11", "关闭")}</div>
      </div>
      <div class="tools">
        <button class="back" aria-label="后退">${ic(18, 14, svg`<path d="M1.500 7H17M7.500 1L1.500 7l6 6" stroke="#ccc" fill="none" stroke-width="1.400"/>`)}</button>
        <button class="again" aria-label="刷新">${ic(18, 18, svg`<path d="M16.500 9a7.500 7.500 0 1 1-2-5.200M15.500 1v4.500H11" stroke="#222" fill="none" stroke-width="1.400"/>`)}</button>
        <div class="url">${ic(13, 16, svg`<rect x="1" y="5.500" width="11" height="9.500" rx="2" fill="none" stroke="#555"/><path d="M3.500 5.500V4q0-3 3-3t3 3v1.500" fill="none" stroke="#555"/><circle cx="6.500" cy="10" r="1" fill="#555"/>`)}
          <div class="addr" role="textbox" aria-label="地址栏">https://<b>www.iamw...</b></div>
          ${ic(16, 16, svg`<path d="M3 6Q1 2 7 .5Q14 0 15.500 6Q16 10 13 12Q14 6 9.500 5Q5 5 5.500 10Q2 9 3 6Z" fill="#888"/><path d="M.5 7Q2 12 7 10.500Q8 14 12.500 13.500Q9 17 5 15Q1 13 .5 7Z" fill="#999"/><circle cx="9" cy="8.500" r="1.800" fill="#888"/>`)}
          <span class="gap">${ic(16, 16, svg`<path d="M8 1l2 4.800 5 .4-3.800 3.300L12.400 15 8 12.200 3.600 15l1.200-5.500L1 6.200l5-.4z" stroke="#666" fill="none"/>`)}</span></div>
        <button class="ext" aria-label="扩展">${ic(16, 17, svg`<path d="M4 3h3q-.5-2 1.500-2T10 3h3.500v4q-2-.5-2 1.700t2 1.800V15H10q.5 2-1.500 1.500T7 15H4v-4Q1 11 1 9t3-2z" stroke="#333" fill="none" stroke-width="1.300"/>`)}</button><i class="bar"></i>
        <button class="me" aria-label="个人资料">${ic(22, 22, svg`<circle cx="11" cy="11" r="11" fill="#d8d4d0"/><circle cx="11" cy="8" r="4.500" fill="#8a8480"/><path d="M3.500 19q0-5 7.500-5t7.500 5Q11 24 3.500 19z" fill="#8a8480"/>`)}</button>
        <button class="more" aria-label="更多">${ic(14, 4, svg`<circle cx="2" cy="2" r="1.300"/><circle cx="7" cy="2" r="1.300"/><circle cx="12" cy="2" r="1.300"/>`)}</button>
        <button class="pilot" aria-label="Copilot">${ic(22, 22, svg`<path d="M6 1h8q2 0 2.500 2l.7 3H13q-2 0-2.700 2L8 15.500Q7.500 17 6 17H4Q0 17 1 12L3 4Q3.700 1 6 1Z" fill="#1a8be8"/><path d="M2 8h8l-2 7.500Q7.500 17 6 17H4Q0 17 1 12Z" fill="#3cb878"/><path d="M1 12h8l-1 3.500Q7.500 17 6 17H4Q.2 17 1 12Z" fill="#f2c32c"/><path d="M16 21H8q-2 0-2.500-2L5 16.500h4q1.500 0 2-2L13 8q.6-2 2.500-2H18q4 0 3 5l-2 7q-.8 3-3 3Z" fill="#e8508a"/><path d="M13 8q.6-2 2.500-2H18q3.500 0 3 4h-8.500z" fill="#a35be0"/><path d="M5 16.500h14.500L19 18q-.8 3-3 3H8q-2 0-2.500-2z" fill="#f5784a"/>`)}</button>
      </div>
      <div class="page">
        <div class="site">
          <div class="nav"><a class="logo" href="#home" aria-label="首页">${frog(40)}</a><button class="ham" aria-label="菜单">${ic(20, 17, svg`<path d="M1 1.500h18M1 8.500h18M1 15.500h18" stroke="#fff" stroke-width="3"/>`)}</button></div>
          <div class="title"><h1>在线秒表</h1><button class="like">${ic(13, 12, svg`<path d="M6.500 11.500Q-3 4.500 2 .8 5-.6 6.500 2.500 8-.6 11 .8 16 4.500 6.500 11.500z" fill="#e87a8e"/>`)}点赞 (3684)</button></div>
          <div class="clock">00:01:42.544</div>
          <div class="acts"><button class="go">继续</button><button class="lap">计次</button><button class="reset">复位</button></div>
          <div class="log"><span>${ic(14, 14, svg`<circle cx="7" cy="7" r="5.500" fill="none" stroke="#28a745" stroke-width="2"/>`)}记录1</span><span>00:01:42.544</span></div>
          <div class="float"><button aria-label="账户">${ic(14, 16, svg`<circle cx="7" cy="4" r="3.500" fill="#ddd"/><path d="M1 14V10q0-3 3-3h6q3 0 3 3v4z" fill="#ddd"/>`)}</button><button aria-label="留言">${ic(18, 16, svg`<path d="M7 1h9q1.500 0 1.500 1.500v5Q17.500 9 16 9v2.500L13.500 9H7Q6 9 6 7.500v-5Q6 1 7 1Z" fill="#ddd"/><path d="M1.500 5H5v4q0 1 1 1h5v1.500q0 1-1 1H6L3.500 15v-2.500h-2q-1 0-1-1V6q0-1 1-1z" fill="#ddd"/>`)}</button></div>
        </div>
        <div class="scroll">${ic(9, 6, svg`<path d="M4.500 0L9 6H0z" fill="#8b8b8b"/>`)}<div class="thumb"></div>${ic(9, 6, svg`<path d="M4.500 6L9 0H0z" fill="#8b8b8b"/>`)}</div>
      </div>`;
  }
}

/* ---------- desktop ---------- */
const star = svg`<path d="M7 0l1 3 3-1-1 3 3 2-3 1 1 3-3-1-1 3-1-3-3 1 1-3-3-1 3-2-1-3 3 1z" fill="#d9d6a2" stroke="#9a9a7a" stroke-width=".5"/>`;
const caret = ic(6, 4, svg`<path d="M0 0h6L3 4z" fill="#111"/>`);
const fileTools = [
  ic(16, 20, svg`<path d="M1 1h9l5 5v13H1z" fill="#8d929c"/><path d="M10 1v5h5" fill="#a9adb5" stroke="#777"/>`, "新建"),
  ic(22, 22, svg`<path d="M1 19V6h6l2 2h9v11z" fill="#9b9b80"/><path d="M3 19l4-9h14l-4 9z" fill="#a8a890"/><path d="M9 6Q12 0 17 3V0l5 5-5 4V6q-4-2-8 0z" fill="#7fa78a"/>`, "打开"),
  ic(18, 20, svg`<path d="M0 2h18v16H0z" fill="#7e838f"/><path d="M4 2h10v7H4z" fill="#b5b9c0"/><path d="M4 12h10v6H4z" fill="#5d626e"/>`, "保存"),
  ic(24, 22, svg`<path d="M7 9l3-8 8 2-2 8z" fill="#a5a5a5"/><path d="M1 11l5-4 17 3v6l-7 5-15-4z" fill="#858585"/><path d="M3 14l12 3 1 3-12-3z" fill="#c5c5c5"/>`, "打印"),
];
const editTools = [
  ic(22, 22, svg`<g fill="none" stroke="#8a8a72" stroke-width="2.500"><circle cx="5" cy="10" r="3.300"/><circle cx="10" cy="18" r="2.800"/><path d="M8 10l13-4M11 15L13 1"/></g>`, "剪切"),
  ic(22, 22, svg`<path d="M1 2h10v13H1z" fill="#a4a7ad" stroke="#7d828c"/><path d="M9 8h8l4 4v9H9z" fill="#9fa3aa" stroke="#7d828c"/><path d="M11 12h6M11 15h8M3 6h6M3 9h5" stroke="#666"/>`, "复制"),
  ic(20, 22, svg`<path d="M1 3h15v17H1z" fill="#a29c7c" stroke="#827d60"/><path d="M5 1h7v4H5z" fill="#888"/><path d="M9 9h7l3 3v9H9z" fill="#b5b8be" stroke="#7d828c"/>`, "粘贴"),
  ic(18, 18, svg`<path d="M2 2l14 14M16 2L2 16" stroke="#7a7a7a" stroke-width="2.800"/>`, "删除"),
];
const sideIcons = [
  "M0 4h9M0 18h6v6H0z", "M8 2L0 10l8 8z", "M0 6h9M0 20a4 4 0 1 0 1-6", "M0 4h7L3 10M0 20h7v6H0", "M0 4l5 2v14l5 2v6l-10-4z", "M5 4h5v8H5zM0 12v12h8", "M0 4l9-2v20l-9 3z", "M0 2q10 2 11 16", "M0 2h7v24H0", "M0 4a11 11 0 0 1 0 22", "M0 4l7 18", "M0 4l6 18M0 10h9", "M0 6h6M0 16h5", "M0 4h9v20H0z",
];
const sideColors = ["#e6a41a", "#c02020", "#8a2080", "#2a60d0", "#e08a20", "#555", "#2a90e0", "#2a70d0", "#30a050", "#456a90", "#111", "#111", "#555", "#d05050"];

@customElement("app-root")
class AppRoot extends LitElement {
  static styles = css`
    :host { display: grid; grid-template-rows: 9px 34px 33px minmax(0, 1fr) 11px; height: 100vh; overflow: hidden; position: relative; background: #dcdcdc; font: 12px/16px ${FONT}; color: #111; }
    .ic { display: block; flex: none; }
    button { border: 0; background: none; padding: 0; font: inherit; }
    .cap { background: linear-gradient(#dedede, #dadada); border-bottom: 1px solid #b4b4b4; }
    .bar { display: flex; align-items: center; background: linear-gradient(#dcdcdc, #d2d2d2); border-bottom: 2px solid #9a9a9a; box-sizing: border-box; min-width: 0; }
    .bar.sel { background: linear-gradient(#e0e0e0, #d4d4d4); border-bottom: 1px solid #999; gap: 6px; }
    .group { display: flex; align-items: center; height: 30px; border-right: 1px solid #f4f4f4; box-shadow: 1px 0 #b9b9b9; gap: 10px; padding: 0 9px 0 7px; }
    .group.first { padding-left: 0; }
    .group.tight { padding-right: 4px; }
    .start { display: flex; align-items: center; gap: 4px; }
    .find { display: flex; align-items: center; width: 144px; height: 24px; margin: 0 5px 0 4px; box-sizing: border-box; background: #fff; border: 1px solid #a8a8a8; padding: 0 5px 0 3px; }
    .find input { flex: 1; min-width: 0; border: 0; outline: 0; font: 12px/16px ${FONT}; padding: 0; background: none; }
    .find input::placeholder { color: #9a9a9a; }
    .opts { align-self: flex-end; height: 30px; display: grid; place-items: end center; padding: 0 5px 9px 0; box-sizing: border-box; border-right: 1px solid #bbb; }
    .pick { display: flex; flex: none; width: 157px; height: 22px; box-sizing: border-box; border: 1px solid #6a7a90; background: #fff; align-items: center; position: relative; }
    .pick.shift { width: 145px; margin-left: -12px; }
    .pick select { appearance: none; border: 0; outline: 0; background: none; width: 100%; padding: 0 20px 0 3px; font: 12px/20px ${FONT}; color: #000; }
    .pick i { position: absolute; right: 0; top: 0; bottom: 0; width: 16px; border: 1px solid #2a6ab8; box-sizing: border-box; background: linear-gradient(#f2f9ff, #8fc2f5 50%, #59a2ec); display: grid; place-items: center; pointer-events: none; }
    .sel .group { gap: 5px; padding: 0 6px 0 0; }
    .work { display: grid; grid-template-columns: 12px minmax(0, 1031fr) 34px minmax(0, 1443fr); min-height: 0; }
    .side { background: linear-gradient(#b9b9b9, #b0b0b0); padding-top: 45px; border-right: 1px solid #666; box-sizing: border-box; overflow: hidden; }
    .side button { display: block; width: 11px; height: 40px; background: #cfcfcf; border-top: 1px solid #f4f4f4; border-bottom: 2px solid #777; margin: 0 0 1px; overflow: hidden; }
    .side button.on { background: #f0f0f0; }
    .side button.far { margin-top: 14px; }
    .palette { background: linear-gradient(#d5d5d5, #e0e0e0 60%, #c9c9c9); }
    .palette div { display: flex; flex-direction: column; align-items: center; gap: 7px; height: 179px; padding-top: 5px; box-sizing: border-box; background: #e4e4e4; border: 1px solid #b5b5b5; border-top-color: #999; }
    .grip { width: 22px; height: 0; border-top: 2px dotted #999; }
    .left { align-self: flex-start; margin-left: 8px; }
    .status { background: linear-gradient(#dedede, #e4e4e4); border-top: 1px solid #f4f4f4; display: flex; gap: 12px; padding: 5px 0 0 26px; overflow: hidden; box-sizing: border-box; }
    task-manager { position: absolute; left: 575px; top: 535px; width: 789px; height: 593px; }
    web-browser { position: absolute; left: 1083px; top: 9px; width: 557px; height: 408px; }
    .ime { position: absolute; right: 0; top: 1217px; display: flex; align-items: center; height: 30px; width: 233px; box-sizing: border-box; padding-left: 8px; background: #fff; border-radius: 6px 0 0 6px; overflow: hidden; }
    .ime i { width: 1px; height: 18px; background: #ccc; margin: 0 8px 0 9px; flex: none; }
    .ime button { display: grid; place-items: center; width: 31px; height: 30px; flex: none; }
    .ime .lang { width: 20px; font: 500 17px/26px "Noto Sans CJK SC", sans-serif; }
    .mark { position: absolute; right: 6px; top: 1284px; margin: 0; display: flex; gap: 8px; align-items: baseline; color: #a4a4a4; font: 16px/20px "Noto Sans CJK SC", sans-serif; text-shadow: 1px 1px #555; }
    .mark b { font: 13px/20px "Liberation Mono", monospace; }
  `;
  render() {
    const op = (i: number) => ic(22, 24, svg`${i === 0 ? svg`<path d="M1 9h10v9H1zM8 12h13v9H8z" fill="#b9bcc4" stroke="#888b96"/><path d="M3 12h6M10 15h9M10 18h9" stroke="#888b96" stroke-dasharray="1 1"/>` : i === 1 ? svg`<path d="M2 9h7v12H4z" fill="#a9b2c8" stroke="#8088a0"/><path d="M15 2h6v13h-7V9z" fill="#aaa296" stroke="#888"/><circle cx="16" cy="13" r="2.500" fill="#d8cfa8"/>` : i === 2 ? svg`<path d="M3 8l9-4 9 4v10l-9 4-9-4z" fill="#a9abc8" stroke="#888ba8"/><circle cx="4" cy="17" r="3.500" fill="#dcc8a0" stroke="#c08080"/><circle cx="9" cy="16" r="3.500" fill="#dcc8a0" stroke="#c08080"/>` : i === 3 ? svg`<path d="M1 9h4q8 4 16 0v5H1zM1 16l3 3 3-3 3 3 3-3 3 3 3-3 2 3v4H1z" fill="#a3abb8" stroke="#808896"/>` : svg`<path d="M2 8h6v13H2z" fill="#98a0b4" stroke="#808896"/><path d="M10 10h11M10 13h9M10 16h7M10 19h4" stroke="#999"/>`}<g transform="translate(${i === 0 || i === 4 ? 8 : 1} 0)">${star}</g>`);
    return html`
      <div class="cap"></div>
      <div class="bar">
        <div class="group first"><button class="start">${ic(18, 24, svg`<circle cx="4" cy="12" r="9" fill="#35a5e0"/><path d="M0 16q8 4 12-4 1 8-8 9z" fill="#40b040"/><path d="M-2 20Q14 20 16 4" stroke="#e6b820" stroke-width="3" fill="none"/><path d="M-2 2l5 2 6-1-3 8-5 2z" fill="#d02028"/>`)}启动${caret}</button>${fileTools.map(t => html`<button>${t}</button>`)}</div>
        <div class="group">${editTools.map(t => html`<button>${t}</button>`)}</div>
        <div class="group tight"><button>${ic(20, 22, svg`<path d="M1 9l6-7v4q12-2 12 8-1 4-5 7 3-8-1-10-3-1-6 0v5z" fill="#4a78d0"/>`, "撤销")}</button>${caret}</div>
        <div class="group tight"><button>${ic(22, 24, svg`<path d="M3 1h7v16H3z" fill="#3a50a8"/><path d="M5 2v14M8 2v14" stroke="#8a9ad8"/><path d="M11 6h11M11 9h8M11 12h7" stroke="#444" stroke-width="1.500"/><path d="M6 16l1 3 4-1-3 3 1 3-3-2-3 2 1-3-3-2 4-1z" fill="#f4d428"/>`, "生成")}</button>${caret}</div>
        <div class="group tight"><button>${ic(23, 24, svg`<rect x="1" y="1" width="12" height="13" fill="#fff" stroke="#101080" stroke-width="1.500"/><path d="M6 3.500h2.500v2H6zM5.500 6.500h3v5h1M5 12h5" stroke="#101080" stroke-width="1.500" fill="none"/><path d="M15 11l7 6-7 6-7-6z" fill="#fff" stroke="#101080" stroke-width="1.500"/><path d="M15 12v10l5-5z" fill="#3a60d0"/>`, "信息")}</button></div>
        <label class="find"><input type="text" placeholder="查找命令" aria-label="查找命令">${ic(14, 15, svg`<circle cx="8.500" cy="5.500" r="4.500" fill="none" stroke="#444" stroke-width="1.500"/><path d="M5.500 9L1 14" stroke="#444" stroke-width="2.500"/><circle cx="8.500" cy="5.500" r="2" fill="none" stroke="#888"/>`)}</label>
        <button class="opts" aria-label="工具条选项">${caret}</button>
      </div>
      <div class="bar sel">
        <span class="pick shift"><select aria-label="选择过滤器"><option>没有选择过滤器</option></select><i>${ic(10, 7, svg`<path d="M0 0h10L5 7z"/>`)}</i></span>
        <span class="pick"><select aria-label="选择范围"><option>整个装配</option></select><i>${ic(10, 7, svg`<path d="M0 0h10L5 7z"/>`)}</i></span>
        <div class="group"><button>${ic(17, 18, svg`<path d="M1 3h5v5H1zM1 11h6v5H1zM9 9l4-6 3 3-2 7-4 3z" fill="#aaa" stroke="#777"/>`)}</button></div>
        <div class="group"><button>${ic(16, 18, svg`<path d="M1 2q2 5 8 4l-2 3Q1 8 1 2zM7 9h9l-3 4v4h-2v-4z" fill="#999"/>`)}</button>
          <button>${ic(17, 18, svg`<rect x=".7" y=".7" width="15.500" height="16.500" fill="#f4ece8" stroke="#d01010" stroke-width="1.400"/><path d="M6 3v8M2 7h8" stroke="#801010"/><path d="M7 9h8l-3 3v4h-2v-4z" fill="#f0b810"/>`)}</button>${caret}
          <button>${ic(17, 18, svg`<path d="M2 6Q3 1 7 3t2 6" stroke="#22228a" fill="none" stroke-width="1.800"/><circle cx="10.500" cy="12" r="4" fill="none" stroke="#d01010" stroke-width="1.400"/><path d="M10.500 6v12M5 12h11" stroke="#d01010"/>`)}</button>
          <button>${ic(17, 18, svg`<path d="M1 4l6-2 3 4-3 2zM9 4v12h5M9 9h5" stroke="#555" fill="#888"/><path d="M12 7h4v3h-4zM12 13h4v3h-4z" fill="#e8d860" stroke="#777"/>`)}</button></div>
        <div class="group"><button>${ic(15, 16, svg`<path d="M4 1.500h7l3.500 6.500-3.500 6.500H4L.7 8z" fill="#e8e8e8" stroke="#222" stroke-width="1.300"/><circle cx="7.500" cy="8" r="2" fill="#d01010"/>`)}</button>
          <button>${ic(17, 16, svg`<rect x="2" y="2" width="12" height="12" fill="none" stroke="#222" stroke-width="1.500" stroke-dasharray="2 2"/><circle cx="2" cy="2" r="1.500" fill="#d01010"/><circle cx="14" cy="14" r="1.500" fill="#d01010"/>`)}</button>${caret}</div>
        <button>${ic(17, 18, svg`<path d="M1 9l6-6 9 2v7l-7 5q-8-1-8-8z" fill="#e4e6ee" stroke="#444"/><path d="M7 8l4 1-3 6M11 5l3 1" stroke="#c02020" fill="none"/>`)}</button>
        <button>${ic(17, 18, svg`<path d="M1 4l7-3 8 3v10l-7 4-8-4z" fill="#6ab0f4"/><path d="M9 7l7-3v10l-7 4z" fill="#3a7ae0"/><path d="M1 4l8 3v11" stroke="#fff" fill="none" stroke-width=".6"/>`)}</button>
      </div>
      <div class="work">
        <nav class="side">${sideIcons.map((d, i) => html`<button class=${classMap({ on: i === 3, far: i === 7 || i === 8 || i === 9 })} aria-label="资源 ${i + 1}">${ic(11, 28, svg`<path d=${d} fill=${[7, 9, 10, 11].includes(i) ? "none" : sideColors[i]} fill-opacity=".7" stroke=${sideColors[i]} stroke-width=${[7, 10, 11].includes(i) ? 3 : 1.5}/>`)}</button>`)}</nav>
        <program-navigator></program-navigator>
        <div class="palette"><div><span class="grip"></span>${[0, 1, 2, 3, 4].map(i => op(i))}<span class="left">${ic(4, 6, svg`<path d="M4 0v6L0 3z"/>`)}</span></div></div>
        <part-view></part-view>
      </div>
      <footer class="status">${[0, 1, 2, 3, 4].map(i => ic(18, 12, svg`<path d=${["M3 0h6v12H3z", "M1 3l8-3 7 3v9H1z", "M0 1l4 3 5-3 5 3 4-3v11H0z", "M1 0h9v12H1zM12 3h4v9", "M1 0h9v12H1zM12 3h4v9"][i]} fill="#9a9ca6" stroke="#777"/>`))}</footer>
      <web-browser></web-browser>
      <task-manager></task-manager>
      <div class="ime">${ic(20, 18, svg`<path d="M18 3.500Q8 0 4 3T4 8Q14 9 16 11T12 15.500Q6 16 3 14" stroke="#ff6a0a" stroke-width="4" fill="none"/>`, "搜狗输入法")}<i></i>
        <button class="lang">中</button>
        <button aria-label="标点">${ic(14, 16, svg`<circle cx="4" cy="4" r="2.300" fill="none" stroke="#111" stroke-width="1.300"/><circle cx="9.500" cy="11" r="2"/><path d="M11.300 11q0 3-2.500 4" stroke="#111" stroke-width="1.300" fill="none"/>`)}</button>
        <button aria-label="语音">${ic(15, 18, svg`<rect x="4" y="1" width="7" height="11" rx="3.500" fill="none" stroke="#111" stroke-width="1.500"/><path d="M1 8q0 6.500 6.500 6.500T14 8M7.500 14.500V18" fill="none" stroke="#111" stroke-width="1.500"/>`)}</button>
        <button aria-label="键盘">${ic(17, 16, svg`<rect x="1" y="1" width="15" height="14" rx="1.500" fill="none" stroke="#111" stroke-width="1.500"/><path d="M4 5.500h9M4 8.500h9" stroke="#111" stroke-dasharray="1.500 2"/><path d="M5 11.500h7" stroke="#111"/>`)}</button>
        <button aria-label="皮肤">${ic(18, 16, svg`<path d="M6 1q3 3 6 0l5 1v5l-3 .5V15H4V7.500L1 7V2z" fill="none" stroke="#111" stroke-width="1.500"/>`)}</button>
        <button aria-label="工具箱">${ic(17, 17, svg`<g fill="none" stroke="#111" stroke-width="1.500"><rect x="1.500" y="1.500" width="5" height="5"/><circle cx="13" cy="4" r="2.700"/><rect x="1.500" y="10.500" width="5" height="5"/><rect x="10.500" y="10.500" width="5" height="5"/></g>`)}</button>
        ${ic(20, 22, svg`<circle cx="11" cy="11" r="10" fill="#f4f4f4" stroke="#ddd"/><path d="M2 8q6-3 12 0v4q-6 3-12 0z" fill="#f08030"/><circle cx="6" cy="11" r="2"/>`)}</div>
      <p class="mark"><span><b>UG</b>爱好者论坛</span><b>WWW.UGSNX.COM</b></p>`;
  }
}
